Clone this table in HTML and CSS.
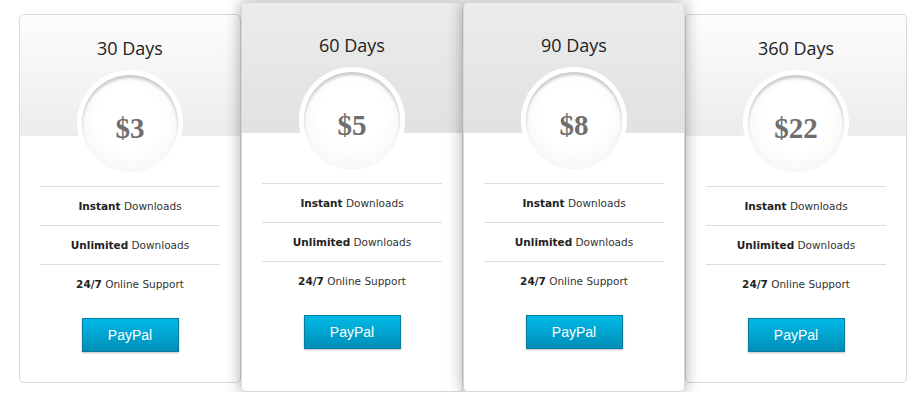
FILE: index.html
```html
<!DOCTYPE html>
<html lang="en">
<head>
    <meta charset="UTF-8">
    <meta name="viewport" content="width=device-width, initial-scale=1.0">
    <title>Pricing</title>
    <link rel="stylesheet" href="styles.css">
</head>
<body>
    <div class="pricing">
        <div class="plan">
            <h2>30 Days</h2>
            <div class="price"><div class="price-inner">$3</div></div>
            <ul>
                <li><b>Instant</b> Downloads</li>
                <li><b>Unlimited</b> Downloads</li>
                <li><b>24/7</b> Online Support</li>
            </ul>
            <a href="#" class="btn">PayPal</a>
        </div>
        <div class="plan featured">
            <h2>60 Days</h2>
            <div class="price"><div class="price-inner">$5</div></div>
            <ul>
                <li><b>Instant</b> Downloads</li>
                <li><b>Unlimited</b> Downloads</li>
                <li><b>24/7</b> Online Support</li>
            </ul>
            <a href="#" class="btn">PayPal</a>
        </div>
        <div class="plan featured">
            <h2>90 Days</h2>
            <div class="price"><div class="price-inner">$8</div></div>
            <ul>
                <li><b>Instant</b> Downloads</li>
                <li><b>Unlimited</b> Downloads</li>
                <li><b>24/7</b> Online Support</li>
            </ul>
            <a href="#" class="btn">PayPal</a>
        </div>
        <div class="plan">
            <h2>360 Days</h2>
            <div class="price"><div class="price-inner">$22</div></div>
            <ul>
                <li><b>Instant</b> Downloads</li>
                <li><b>Unlimited</b> Downloads</li>
                <li><b>24/7</b> Online Support</li>
            </ul>
            <a href="#" class="btn">PayPal</a>
        </div>
    </div>
</body>
</html>
```

FILE: styles.css
```css
/* Pricing table */
body {
    margin: 0;
    padding: 0;
    background-color: #fff;
    font-family: "DejaVu Sans", Verdana, sans-serif;
}
.pricing {
    display: flex;
    align-items: flex-start;
    padding: 2px 0 0 19px;
}
.plan {
    width: 220px;
    margin-top: 12px;
    padding: 22px 0 30px;
    border: 1px solid #d9d9d9;
    border-radius: 5px;
    background: linear-gradient(to bottom, #fdfdfd 0, #ececec 121px, #fff 121px);
    text-align: center;
}
.plan.featured {
    position: relative;
    z-index: 1;
    margin-top: 0;
    padding: 31px 0 42px;
    background: linear-gradient(to bottom, #ececec 0, #e1e1e1 130px, #fff 130px);
    box-shadow: 0 0 16px rgba(0, 0, 0, 0.36);
}
.plan h2 {
    margin: 0;
    font-family: "Open Sans", sans-serif;
    font-weight: normal;
    font-size: 18px;
    line-height: 22px;
    color: #222;
}
.price {
    width: 96px;
    height: 96px;
    margin: 11px auto 0;
    padding: 5px;
    border-radius: 50%;
    background-color: #fff;
}
.price-inner {
    height: 96px;
    border-radius: 50%;
    background: radial-gradient(circle at 50% 45%, #fff 45%, #f1f1f1 100%);
    box-shadow: inset 0 3px 3px rgba(0, 0, 0, 0.2), 0 1px 2px rgba(0, 0, 0, 0.06);
    font-family: "Liberation Serif", "Times New Roman", serif;
    font-weight: bold;
    font-size: 29px;
    line-height: 106px;
    color: #6e6e6e;
}
.plan ul {
    list-style: none;
    width: 180px;
    margin: 10px auto 0;
    padding: 0;
}
.plan li {
    border-top: 1px solid #dcdcdc;
    line-height: 38px;
    font-size: 10.5px;
    color: #333;
}
.plan li b {
    color: #222;
}
.btn {
    display: block;
    width: 95px;
    height: 32px;
    margin: 15px auto 0;
    border: 1px solid #0a7a9c;
    background: linear-gradient(to bottom, #00b9e6, #008fb8);
    box-shadow: 0 1px 2px rgba(0, 0, 0, 0.25);
    font-family: "Liberation Sans", Arial, sans-serif;
    font-size: 14px;
    line-height: 32px;
    color: #fff;
    text-decoration: none;
}
```
